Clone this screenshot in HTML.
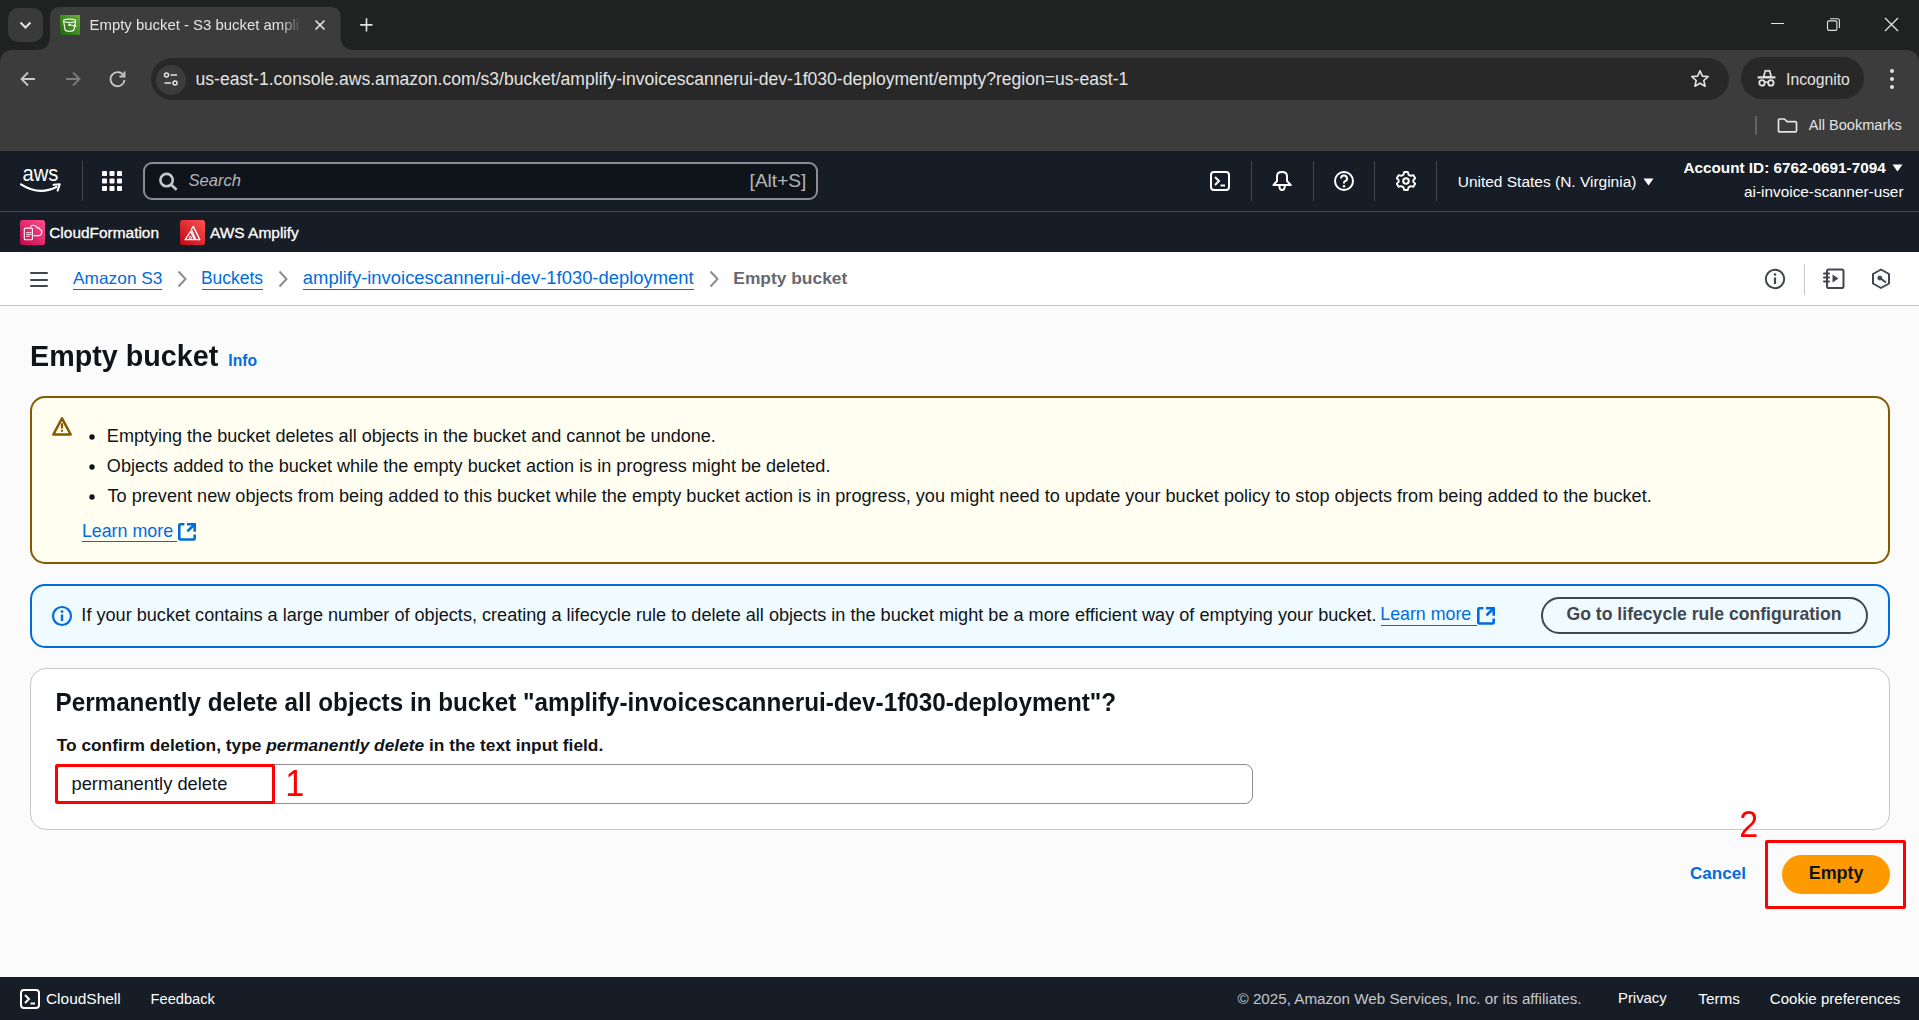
<!DOCTYPE html>
<html><head><meta charset="utf-8"><title>Empty bucket - S3 bucket</title>
<style>html,body{margin:0;padding:0;width:1919px;height:1020px;overflow:hidden;background:#fafafa;font-family:"Liberation Sans",sans-serif;}</style>
</head><body>
<div style='position:absolute;left:0px;top:0px;width:1919px;height:50px;background:#202221'></div><div style='position:absolute;left:8px;top:8px;width:35px;height:34px;background:#3a3a3a;border-radius:10px'></div><svg style='position:absolute;left:18px;top:19px;' width='15' height='12' viewBox='0 0 15 12'><path d='M2.5 3.5 L7.5 8.5 L12.5 3.5' fill='none' stroke='#e3e3e3' stroke-width='2'/></svg><svg style='position:absolute;left:26px;top:7px;' width='345' height='44' viewBox='0 0 345 44'><path d='M10 43 Q24 43 24 29 L24 10.5 Q24 0 34.5 0 L304 0 Q314.6 0 314.6 10.5 L314.6 29 Q314.6 43 328.6 43 L328.6 44 L10 44 Z' fill='#3c3c3c'/></svg><svg style='position:absolute;left:60px;top:15px;' width='20' height='20' viewBox='0 0 20 20'><defs><linearGradient id='fg' x1='0' y1='1' x2='1' y2='0'><stop offset='0' stop-color='#1b660f'/><stop offset='1' stop-color='#6cae3e'/></linearGradient></defs><rect width='20' height='20' fill='url(#fg)'/><ellipse cx='9.6' cy='5.8' rx='6' ry='1.7' fill='none' stroke='#e8f5e0' stroke-width='1.2'/><path d='M3.6 5.8 L5 14.5 Q5.5 16.3 9.6 16.3 Q13.5 16.3 14 14.5 L15.6 5.8' fill='none' stroke='#e8f5e0' stroke-width='1.2'/><circle cx='9.5' cy='9.7' r='1.3' fill='#e8f5e0'/><path d='M9.5 9.7 L14.5 11' stroke='#e8f5e0' stroke-width='1.1'/><path d='M14 9.3 L16.8 11.2 L14 12.6 Z' fill='#fff'/></svg><svg style='position:absolute;left:314px;top:19px;' width='12' height='12' viewBox='0 0 12 12'><path d='M1.5 1.5 L10.5 10.5 M10.5 1.5 L1.5 10.5' stroke='#e3e3e3' stroke-width='1.7'/></svg><svg style='position:absolute;left:359.5px;top:18px;' width='13' height='14' viewBox='0 0 13 14'><path d='M6.5 0.3 V13.5 M0.2 6.9 H12.5' stroke='#e3e3e3' stroke-width='1.6'/></svg><div style='position:absolute;left:1771px;top:23px;width:13px;height:1.1999999999999993px;background:#e3e3e3'></div><svg style='position:absolute;left:1826px;top:17px;' width='15' height='15' viewBox='0 0 15 15'><rect x='1.5' y='3.9' width='9.4' height='9.5' rx='1.3' fill='none' stroke='#e3e3e3' stroke-width='1.1'/><path d='M4 1.7 H11.6 Q13.4 1.7 13.4 3.5 V11' fill='none' stroke='#e3e3e3' stroke-width='1.1'/></svg><svg style='position:absolute;left:1884px;top:17px;' width='15' height='15' viewBox='0 0 15 15'><path d='M1 1 L14 14 M14 1 L1 14' stroke='#e3e3e3' stroke-width='1.3'/></svg><div style='position:absolute;left:0px;top:50px;width:1919px;height:101px;background:#3c3c3c'></div><div style='position:absolute;left:0px;top:50px;width:12px;height:12px;background:#202221'></div><div style='position:absolute;left:0px;top:50px;width:12px;height:12px;background:#3c3c3c;border-top-left-radius:12px'></div><div style='position:absolute;left:1907px;top:50px;width:12px;height:12px;background:#202221'></div><div style='position:absolute;left:1907px;top:50px;width:12px;height:12px;background:#3c3c3c;border-top-right-radius:12px'></div><svg style='position:absolute;left:19px;top:70px;' width='18' height='18' viewBox='0 0 18 18'><path d='M16 9 H3 M9 2.5 L2.5 9 L9 15.5' fill='none' stroke='#c7c7c7' stroke-width='1.8'/></svg><svg style='position:absolute;left:64px;top:70px;' width='18' height='18' viewBox='0 0 18 18'><path d='M2 9 H15 M9 2.5 L15.5 9 L9 15.5' fill='none' stroke='#7c7c7c' stroke-width='1.8'/></svg><svg style='position:absolute;left:108px;top:68.8px;' width='20' height='20' viewBox='0 0 20 20'><path d='M15.5 6.5 A7 7 0 1 0 16.5 11' fill='none' stroke='#c7c7c7' stroke-width='1.8'/><path d='M16.5 2.5 V7.5 H11.5' fill='none' stroke='#c7c7c7' stroke-width='1.8'/></svg><div style='position:absolute;left:151px;top:58px;width:1578px;height:42px;background:#282828;border-radius:21px'></div><div style='position:absolute;left:156px;top:65px;width:30px;height:30px;background:#3c3c3c;border-radius:15px'></div><svg style='position:absolute;left:162px;top:70.2px;' width='18' height='18' viewBox='0 0 18 18'><circle cx='4.5' cy='5' r='2' fill='none' stroke='#e3e3e3' stroke-width='1.5'/><path d='M8.5 5 H15' stroke='#e3e3e3' stroke-width='1.5'/><circle cx='13' cy='13' r='2' fill='none' stroke='#e3e3e3' stroke-width='1.5'/><path d='M2.5 13 H9' stroke='#e3e3e3' stroke-width='1.5'/></svg><svg style='position:absolute;left:1690px;top:69px;' width='20' height='20' viewBox='0 0 20 20'><path d='M10 1.8 L12.4 7.1 L18.2 7.6 L13.8 11.5 L15.1 17.2 L10 14.2 L4.9 17.2 L6.2 11.5 L1.8 7.6 L7.6 7.1 Z' fill='none' stroke='#e3e3e3' stroke-width='1.6' stroke-linejoin='round'/></svg><div style='position:absolute;left:1741px;top:57px;width:123px;height:42px;background:#282828;border-radius:21px'></div><svg style='position:absolute;left:1757px;top:69px;' width='20' height='20' viewBox='0 0 20 20'><path d='M6.6 8 L8.3 1.6 Q9.6 2.4 10.9 1.6 Q12 2.3 12.6 1.6 L14.3 8 Z' fill='none' stroke='#e3e3e3' stroke-width='1.7' stroke-linejoin='round'/><path d='M0.6 8.4 H18.4' stroke='#e3e3e3' stroke-width='2.2'/><circle cx='5' cy='13.9' r='2.7' fill='none' stroke='#e3e3e3' stroke-width='1.8'/><circle cx='13.9' cy='13.9' r='2.7' fill='none' stroke='#e3e3e3' stroke-width='1.8'/><path d='M7.6 13.6 Q9.45 12.6 11.3 13.6' fill='none' stroke='#e3e3e3' stroke-width='1.5'/></svg><svg style='position:absolute;left:1888px;top:68px;' width='8' height='24' viewBox='0 0 8 24'><circle cx='4' cy='3' r='2' fill='#e3e3e3'/><circle cx='4' cy='11' r='2' fill='#e3e3e3'/><circle cx='4' cy='19' r='2' fill='#e3e3e3'/></svg><div style='position:absolute;left:1755.3px;top:115.5px;width:2.0px;height:19.0px;background:#626262;border-radius:1px'></div><svg style='position:absolute;left:1776px;top:116px;' width='22' height='18' viewBox='0 0 22 18'><path d='M2.5 4 Q2.5 3 3.5 3 H8.5 L11 5.6 H19.5 Q20.5 5.6 20.5 6.6 V14.8 Q20.5 15.8 19.5 15.8 H3.5 Q2.5 15.8 2.5 14.8 Z' fill='none' stroke='#e3e3e3' stroke-width='1.7' stroke-linejoin='round'/></svg><div style='position:absolute;left:0px;top:151px;width:1919px;height:101px;background:#161d26'></div><div style='position:absolute;left:0px;top:211px;width:1919px;height:1px;background:#424650'></div><svg style='position:absolute;left:20px;top:167px;' width='42' height='27' viewBox='0 0 42 27'><text x='2.4' y='13.8' font-family='Liberation Sans' font-weight='400' font-size='22.5' fill='#fff' textLength='36' lengthAdjust='spacingAndGlyphs'>aws</text><path d='M1 17.4 Q19 29 36.3 20' fill='none' stroke='#fff' stroke-width='2.3' stroke-linecap='round'/><path d='M33.6 17.8 L39.8 17.2 L37.6 23.6' fill='none' stroke='#fff' stroke-width='2' stroke-linecap='round' stroke-linejoin='round'/></svg><div style='position:absolute;left:82px;top:161px;width:1px;height:40px;background:#424650'></div><svg style='position:absolute;left:102px;top:171px;' width='20' height='20' viewBox='0 0 20 20'><rect x='0' y='0' width='5' height='5' rx='0.8' fill='#fff'/><rect x='0' y='7.5' width='5' height='5' rx='0.8' fill='#fff'/><rect x='0' y='15' width='5' height='5' rx='0.8' fill='#fff'/><rect x='7.5' y='0' width='5' height='5' rx='0.8' fill='#fff'/><rect x='7.5' y='7.5' width='5' height='5' rx='0.8' fill='#fff'/><rect x='7.5' y='15' width='5' height='5' rx='0.8' fill='#fff'/><rect x='15' y='0' width='5' height='5' rx='0.8' fill='#fff'/><rect x='15' y='7.5' width='5' height='5' rx='0.8' fill='#fff'/><rect x='15' y='15' width='5' height='5' rx='0.8' fill='#fff'/></svg><div style='position:absolute;left:143px;top:162px;width:675px;height:38px;background:#0f141a;border:2px solid #8c8c94;border-radius:9px;box-sizing:border-box'></div><svg style='position:absolute;left:158px;top:172px;' width='21' height='21' viewBox='0 0 21 21'><circle cx='8.6' cy='8.1' r='6.2' fill='none' stroke='#c6c6cd' stroke-width='2.6'/><path d='M13.2 12.8 L18.6 17.8' stroke='#c6c6cd' stroke-width='2.7'/></svg><svg style='position:absolute;left:1210px;top:171px;' width='20' height='20' viewBox='0 0 20 20'><rect x='1' y='1' width='18' height='18' rx='3' fill='none' stroke='#fff' stroke-width='2'/><path d='M5 6 L9 10 L5 14' fill='none' stroke='#fff' stroke-width='2'/><path d='M10.5 14.5 H15' stroke='#fff' stroke-width='2'/></svg><div style='position:absolute;left:1250.5px;top:161px;width:1.0px;height:40px;background:#424650'></div><div style='position:absolute;left:1313px;top:161px;width:1px;height:40px;background:#424650'></div><div style='position:absolute;left:1374px;top:161px;width:1px;height:40px;background:#424650'></div><div style='position:absolute;left:1436px;top:161px;width:1px;height:40px;background:#424650'></div><svg style='position:absolute;left:1272px;top:171px;' width='20' height='21' viewBox='0 0 20 21'><path d='M5 10 V5.2 Q5 1 10 1 Q15 1 15 5.2 V10 L18.8 14.1 H1.4 Z' fill='none' stroke='#fff' stroke-width='2' stroke-linejoin='round'/><path d='M7.4 15 Q7.4 19 10.1 19 Q12.8 19 12.8 15' fill='none' stroke='#fff' stroke-width='2'/></svg><svg style='position:absolute;left:1334px;top:171px;' width='20' height='20' viewBox='0 0 20 20'><circle cx='10' cy='10' r='9' fill='none' stroke='#fff' stroke-width='2'/><path d='M7 7.5 A3 3 0 1 1 10.5 10.5 Q10 10.8 10 12.5' fill='none' stroke='#fff' stroke-width='2'/><circle cx='10' cy='15.3' r='1.2' fill='#fff'/></svg><svg style='position:absolute;left:1396px;top:171px;' width='20' height='20' viewBox='0 0 20 20'><path d='M8.2 1 H11.8 L12.5 3.6 L14.8 4.9 L17.4 4.2 L19.2 7.3 L17.3 9.2 V10.8 L19.2 12.7 L17.4 15.8 L14.8 15.1 L12.5 16.4 L11.8 19 H8.2 L7.5 16.4 L5.2 15.1 L2.6 15.8 L0.8 12.7 L2.7 10.8 V9.2 L0.8 7.3 L2.6 4.2 L5.2 4.9 L7.5 3.6 Z' fill='none' stroke='#fff' stroke-width='1.9' stroke-linejoin='round'/><circle cx='10' cy='10' r='2.8' fill='none' stroke='#fff' stroke-width='2'/></svg><svg style='position:absolute;left:1643px;top:178px;' width='11' height='8' viewBox='0 0 11 8'><path d='M0.5 0.5 H10.5 L5.5 7.5 Z' fill='#fff'/></svg><svg style='position:absolute;left:1892px;top:164px;' width='11' height='8' viewBox='0 0 11 8'><path d='M0.5 0.5 H10.5 L5.5 7.5 Z' fill='#fff'/></svg><svg style='position:absolute;left:20px;top:220px;' width='25' height='25' viewBox='0 0 25 25'><defs><linearGradient id='cg' x1='0' y1='1' x2='1' y2='0'><stop offset='0' stop-color='#c2094f'/><stop offset='1' stop-color='#ff4f8b'/></linearGradient></defs><rect width='25' height='25' rx='2.5' fill='url(#cg)'/><rect x='4.3' y='8.1' width='8.1' height='11.7' rx='1' fill='none' stroke='#fff' stroke-width='1.1'/><path d='M6.2 12.6 H11.5 M6.2 14.5 H11.5 M6.2 16.3 H9.5' stroke='#f5c6d8' stroke-width='1.2'/><path d='M10.4 6.6 Q12 4.6 14.5 5.5 Q16.2 6.2 17 7.6 Q19.5 7.6 20.2 9.6 Q22.4 10.6 21.6 13 Q21 15.6 19 15.6 H13.5' fill='none' stroke='#fff' stroke-width='1.1'/></svg><svg style='position:absolute;left:180px;top:220px;' width='25' height='25' viewBox='0 0 25 25'><defs><linearGradient id='ag' x1='0' y1='1' x2='1' y2='0'><stop offset='0' stop-color='#bd0816'/><stop offset='1' stop-color='#ff5252'/></linearGradient></defs><rect width='25' height='25' rx='2.5' fill='url(#ag)'/><path d='M11.3 9.3 L13.3 6.4 L19.8 19.6 H15.7 Z' fill='none' stroke='#fff' stroke-width='1.3' stroke-linejoin='round'/><path d='M10.6 11.4 L5.1 19.6 H14.6 Z' fill='none' stroke='#fff' stroke-width='1.3' stroke-linejoin='round'/><path d='M10.3 15.8 L8.9 18.2 H11.9 Z' fill='none' stroke='#fff' stroke-width='0.9'/></svg><div style='position:absolute;left:0px;top:252px;width:1919px;height:54px;background:#ffffff'></div><div style='position:absolute;left:0px;top:305px;width:1919px;height:1px;background:#c6c6cd'></div><div style='position:absolute;left:0px;top:306px;width:1919px;height:671px;background:#fbfbfb'></div><div style='position:absolute;left:30px;top:271.5px;width:18px;height:2.0px;background:#424650;border-radius:1px'></div><div style='position:absolute;left:30px;top:278.5px;width:18px;height:2.0px;background:#424650;border-radius:1px'></div><div style='position:absolute;left:30px;top:285px;width:18px;height:2px;background:#424650;border-radius:1px'></div><svg style='position:absolute;left:177px;top:270px;' width='11' height='18' viewBox='0 0 11 18'><path d='M1.5 1.5 L8.5 9 L1.5 16.5' fill='none' stroke='#8c8c94' stroke-width='2'/></svg><svg style='position:absolute;left:278px;top:270px;' width='11' height='18' viewBox='0 0 11 18'><path d='M1.5 1.5 L8.5 9 L1.5 16.5' fill='none' stroke='#8c8c94' stroke-width='2'/></svg><svg style='position:absolute;left:709px;top:270px;' width='11' height='18' viewBox='0 0 11 18'><path d='M1.5 1.5 L8.5 9 L1.5 16.5' fill='none' stroke='#8c8c94' stroke-width='2'/></svg><div style='position:absolute;left:73px;top:289px;width:89px;height:1px;background:#006ce0'></div><div style='position:absolute;left:202px;top:289px;width:61px;height:1px;background:#006ce0'></div><div style='position:absolute;left:303px;top:289px;width:391px;height:1px;background:#006ce0'></div><svg style='position:absolute;left:1764px;top:268px;' width='22' height='22' viewBox='0 0 22 22'><circle cx='11' cy='11' r='9.2' fill='none' stroke='#424650' stroke-width='2'/><path d='M11 9.5 V16' stroke='#424650' stroke-width='2.2'/><circle cx='11' cy='6.5' r='1.3' fill='#424650'/></svg><div style='position:absolute;left:1804px;top:264px;width:1px;height:31px;background:#c6c6cd'></div><svg style='position:absolute;left:1823px;top:268px;' width='23' height='22' viewBox='0 0 23 22'><rect x='4' y='1.5' width='16.5' height='18.5' rx='1.8' fill='none' stroke='#424650' stroke-width='2'/><path d='M1 5.5 H6 M1 9.5 H6 M1 13.5 H6' stroke='#424650' stroke-width='2' stroke-linecap='round'/><path d='M9.5 6.5 L15.5 10.5 L9.5 14.5 Z' fill='#424650'/></svg><svg style='position:absolute;left:1871px;top:268px;' width='20' height='22' viewBox='0 0 20 22'><path d='M10 1.5 L18 6 V15.5 L10 20 L2 15.5 V6 Z' fill='none' stroke='#424650' stroke-width='2' stroke-linejoin='round'/><circle cx='8.8' cy='10' r='2' fill='#424650' stroke='#424650' stroke-width='1'/><path d='M9 10 L15 14.5' stroke='#424650' stroke-width='2'/></svg><div style='position:absolute;left:30px;top:395.5px;width:1860px;height:168.5px;background:#fffef0;border:2px solid #855900;border-radius:15px;box-sizing:border-box'></div><svg style='position:absolute;left:51px;top:416px;' width='22' height='21' viewBox='0 0 22 21'><path d='M11 2.3 L19.7 18.5 H2.3 Z' fill='none' stroke='#855900' stroke-width='2.5' stroke-linejoin='round'/><path d='M11 7.2 V12.5' stroke='#855900' stroke-width='2.2'/><rect x='9.9' y='13.8' width='2.2' height='1.9' fill='#855900'/></svg><svg style='position:absolute;left:88px;top:433px;' width='8' height='8' viewBox='0 0 8 8'><circle cx='4' cy='4' r='2.7' fill='#0f141a'/></svg><svg style='position:absolute;left:88px;top:463px;' width='8' height='8' viewBox='0 0 8 8'><circle cx='4' cy='4' r='2.7' fill='#0f141a'/></svg><svg style='position:absolute;left:88px;top:493px;' width='8' height='8' viewBox='0 0 8 8'><circle cx='4' cy='4' r='2.7' fill='#0f141a'/></svg><div style='position:absolute;left:82px;top:541px;width:95px;height:1px;background:#006ce0'></div><svg style='position:absolute;left:178px;top:523px;' width='18' height='18' viewBox='0 0 18 18'><path d='M6.4 1.3 H2.3 Q1.3 1.3 1.3 2.3 V15.5 Q1.3 16.5 2.3 16.5 H15.7 Q16.7 16.5 16.7 15.5 V11.5' fill='none' stroke='#006ce0' stroke-width='2.6'/><path d='M9 1.3 H16.7 V8.8' fill='none' stroke='#006ce0' stroke-width='2.6'/><path d='M9.4 8.4 L16.2 1.8' stroke='#006ce0' stroke-width='2.6'/></svg><div style='position:absolute;left:30px;top:584px;width:1860px;height:64px;background:#f0fbff;border:2px solid #006ce0;border-radius:15px;box-sizing:border-box'></div><svg style='position:absolute;left:51px;top:605px;' width='22' height='22' viewBox='0 0 22 22'><circle cx='11' cy='11' r='9' fill='none' stroke='#006ce0' stroke-width='2.2'/><path d='M11 9.5 V16' stroke='#006ce0' stroke-width='2.4'/><circle cx='11' cy='6.6' r='1.4' fill='#006ce0'/></svg><div style='position:absolute;left:1381px;top:625px;width:96px;height:1px;background:#006ce0'></div><svg style='position:absolute;left:1476.5px;top:606.5px;' width='18' height='18' viewBox='0 0 18 18'><path d='M6.4 1.3 H2.3 Q1.3 1.3 1.3 2.3 V15.5 Q1.3 16.5 2.3 16.5 H15.7 Q16.7 16.5 16.7 15.5 V11.5' fill='none' stroke='#006ce0' stroke-width='2.6'/><path d='M9 1.3 H16.7 V8.8' fill='none' stroke='#006ce0' stroke-width='2.6'/><path d='M9.4 8.4 L16.2 1.8' stroke='#006ce0' stroke-width='2.6'/></svg><div style='position:absolute;left:1540.5px;top:597px;width:327.5px;height:37px;border:2px solid #424650;border-radius:20px;box-sizing:border-box'></div><div style='position:absolute;left:30px;top:668px;width:1860px;height:162px;background:#ffffff;border:1px solid #c6c6cd;border-radius:16px;box-sizing:border-box'></div><div style='position:absolute;left:56px;top:764px;width:1197px;height:40px;background:#ffffff;border:1px solid #8c8c94;border-radius:8px;box-sizing:border-box'></div><div style='position:absolute;left:54.5px;top:764px;width:220.5px;height:40px;border:3.5px solid #ff0000;border-radius:2px;box-sizing:border-box'></div><div style='position:absolute;left:1765px;top:840px;width:140.5px;height:68.5px;border:3.5px solid #ff0000;border-radius:2px;box-sizing:border-box'></div><div style='position:absolute;left:1782px;top:855px;width:108px;height:39px;background:#ff9900;border-radius:20px'></div><div style='position:absolute;left:0px;top:977px;width:1919px;height:43px;background:#161d26'></div><svg style='position:absolute;left:20px;top:989px;' width='20' height='20' viewBox='0 0 20 20'><rect x='1' y='1' width='18' height='18' rx='3' fill='none' stroke='#fff' stroke-width='2'/><path d='M5 6 L9 10 L5 14' fill='none' stroke='#fff' stroke-width='2'/><path d='M10.5 14.5 H15' stroke='#fff' stroke-width='2'/></svg>
<span style='position:absolute;left:89.57px;top:18.31px;font-family:"Liberation Sans", sans-serif;font-size:14.924px;line-height:1;font-weight:400;font-style:normal;color:#e3e3e3;white-space:pre;-webkit-mask-image:linear-gradient(90deg,#000 0,#000 190px,transparent 212px);'>Empty bucket - S3 bucket ampli</span><span style='position:absolute;left:195.50px;top:70.56px;font-family:"Liberation Sans", sans-serif;font-size:17.572px;line-height:1;font-weight:400;font-style:normal;color:#e3e3e3;white-space:pre;'>us-east-1.console.aws.amazon.com/s3/bucket/amplify-invoicescannerui-dev-1f030-deployment/empty?region=us-east-1</span><span style='position:absolute;left:1786.02px;top:71.61px;font-family:"Liberation Sans", sans-serif;font-size:15.748px;line-height:1;font-weight:400;font-style:normal;color:#e3e3e3;white-space:pre;'>Incognito</span><span style='position:absolute;left:1808.75px;top:118.10px;font-family:"Liberation Sans", sans-serif;font-size:14.588px;line-height:1;font-weight:400;font-style:normal;color:#e3e3e3;white-space:pre;'>All Bookmarks</span><span style='position:absolute;left:188.48px;top:172.70px;font-family:"Liberation Sans", sans-serif;font-size:16.591px;line-height:1;font-weight:400;font-style:italic;color:#b4b4bb;white-space:pre;'>Search</span><span style='position:absolute;left:749.62px;top:170.50px;font-family:"Liberation Sans", sans-serif;font-size:19.062px;line-height:1;font-weight:400;font-style:normal;color:#b4b4bb;white-space:pre;'>[Alt+S]</span><span style='position:absolute;left:1457.73px;top:174.23px;font-family:"Liberation Sans", sans-serif;font-size:15.492px;line-height:1;font-weight:400;font-style:normal;color:#ffffff;white-space:pre;'>United States (N. Virginia)</span><span style='position:absolute;left:1683.40px;top:159.99px;font-family:"Liberation Sans", sans-serif;font-size:15.305px;line-height:1;font-weight:700;font-style:normal;color:#ffffff;white-space:pre;'>Account ID: 6762-0691-7094</span><span style='position:absolute;left:1744.04px;top:183.94px;font-family:"Liberation Sans", sans-serif;font-size:15.359px;line-height:1;font-weight:400;font-style:normal;color:#ffffff;white-space:pre;'>ai-invoice-scanner-user</span><span style='position:absolute;left:49.23px;top:225.26px;font-family:"Liberation Sans", sans-serif;font-size:15.458px;line-height:1;font-weight:400;font-style:normal;color:#ffffff;white-space:pre;-webkit-text-stroke-width:0.3px;'>CloudFormation</span><span style='position:absolute;left:210.00px;top:225.24px;font-family:"Liberation Sans", sans-serif;font-size:15.478px;line-height:1;font-weight:400;font-style:normal;color:#ffffff;white-space:pre;-webkit-text-stroke-width:0.3px;'>AWS Amplify</span><span style='position:absolute;left:73.00px;top:270.27px;font-family:"Liberation Sans", sans-serif;font-size:17.328px;line-height:1;font-weight:400;font-style:normal;color:#006ce0;white-space:pre;'>Amazon S3</span><span style='position:absolute;left:200.90px;top:270.14px;font-family:"Liberation Sans", sans-serif;font-size:17.487px;line-height:1;font-weight:400;font-style:normal;color:#006ce0;white-space:pre;'>Buckets</span><span style='position:absolute;left:302.85px;top:269.34px;font-family:"Liberation Sans", sans-serif;font-size:18.418px;line-height:1;font-weight:400;font-style:normal;color:#006ce0;white-space:pre;'>amplify-invoicescannerui-dev-1f030-deployment</span><span style='position:absolute;left:733.32px;top:270.22px;font-family:"Liberation Sans", sans-serif;font-size:17.385px;line-height:1;font-weight:700;font-style:normal;color:#656871;white-space:pre;'>Empty bucket</span><span style='position:absolute;left:30.10px;top:341.90px;font-family:"Liberation Sans", sans-serif;font-size:28.709px;line-height:1;font-weight:700;font-style:normal;color:#0f141a;white-space:pre;transform:scaleY(1.035);transform-origin:0 85%;'>Empty bucket</span><span style='position:absolute;left:228.33px;top:352.59px;font-family:"Liberation Sans", sans-serif;font-size:15.659px;line-height:1;font-weight:700;font-style:normal;color:#006ce0;white-space:pre;'>Info</span><span style='position:absolute;left:106.87px;top:426.86px;font-family:"Liberation Sans", sans-serif;font-size:18.052px;line-height:1;font-weight:400;font-style:normal;color:#0f141a;white-space:pre;'>Emptying the bucket deletes all objects in the bucket and cannot be undone.</span><span style='position:absolute;left:106.87px;top:456.62px;font-family:"Liberation Sans", sans-serif;font-size:18.097px;line-height:1;font-weight:400;font-style:normal;color:#0f141a;white-space:pre;'>Objects added to the bucket while the empty bucket action is in progress might be deleted.</span><span style='position:absolute;left:107.50px;top:486.50px;font-family:"Liberation Sans", sans-serif;font-size:18.121px;line-height:1;font-weight:400;font-style:normal;color:#0f141a;white-space:pre;'>To prevent new objects from being added to this bucket while the empty bucket action is in progress, you might need to update your bucket policy to stop objects from being added to the bucket.</span><span style='position:absolute;left:81.89px;top:522.84px;font-family:"Liberation Sans", sans-serif;font-size:17.841px;line-height:1;font-weight:400;font-style:normal;color:#006ce0;white-space:pre;'>Learn more</span><span style='position:absolute;left:81.37px;top:605.60px;font-family:"Liberation Sans", sans-serif;font-size:18.116px;line-height:1;font-weight:400;font-style:normal;color:#0f141a;white-space:pre;'>If your bucket contains a large number of objects, creating a lifecycle rule to delete all objects in the bucket might be a more efficient way of emptying your bucket.</span><span style='position:absolute;left:1380.29px;top:605.87px;font-family:"Liberation Sans", sans-serif;font-size:17.8px;line-height:1;font-weight:400;font-style:normal;color:#006ce0;white-space:pre;'>Learn more</span><span style='position:absolute;left:1566.50px;top:605.92px;font-family:"Liberation Sans", sans-serif;font-size:17.626px;line-height:1;font-weight:700;font-style:normal;color:#424650;white-space:pre;'>Go to lifecycle rule configuration</span><span style='position:absolute;left:55.48px;top:691.38px;font-family:"Liberation Sans", sans-serif;font-size:24.26px;line-height:1;font-weight:700;font-style:normal;color:#0f141a;white-space:pre;transform:scaleY(1.035);transform-origin:0 85%;'>Permanently delete all objects in bucket "amplify-invoicescannerui-dev-1f030-deployment"?</span><span style='position:absolute;left:56.70px;top:737.06px;font-family:"Liberation Sans", sans-serif;font-size:17.346px;line-height:1;font-weight:700;font-style:normal;color:#0f141a;white-space:pre;'>To confirm deletion, type <i>permanently delete</i> in the text input field.</span><span style='position:absolute;left:71.44px;top:774.61px;font-family:"Liberation Sans", sans-serif;font-size:18.346px;line-height:1;font-weight:400;font-style:normal;color:#0f141a;white-space:pre;'>permanently delete</span><span style='position:absolute;left:285.16px;top:766.76px;font-family:"Liberation Sans", sans-serif;font-size:34.286px;line-height:1;font-weight:400;font-style:normal;color:#ff0000;white-space:pre;transform:scaleY(1.06);transform-origin:0 85%;'>1</span><span style='position:absolute;left:1739.22px;top:808.17px;font-family:"Liberation Sans", sans-serif;font-size:34.039px;line-height:1;font-weight:400;font-style:normal;color:#ff0000;white-space:pre;transform:scaleY(1.1);transform-origin:0 85%;'>2</span><span style='position:absolute;left:1689.94px;top:865.39px;font-family:"Liberation Sans", sans-serif;font-size:17.071px;line-height:1;font-weight:700;font-style:normal;color:#006ce0;white-space:pre;'>Cancel</span><span style='position:absolute;left:1808.69px;top:864.66px;font-family:"Liberation Sans", sans-serif;font-size:17.934px;line-height:1;font-weight:700;font-style:normal;color:#0f141a;white-space:pre;'>Empty</span><span style='position:absolute;left:45.93px;top:990.83px;font-family:"Liberation Sans", sans-serif;font-size:15.489px;line-height:1;font-weight:400;font-style:normal;color:#ffffff;white-space:pre;'>CloudShell</span><span style='position:absolute;left:150.59px;top:991.58px;font-family:"Liberation Sans", sans-serif;font-size:14.61px;line-height:1;font-weight:400;font-style:normal;color:#ffffff;white-space:pre;'>Feedback</span><span style='position:absolute;left:1237.50px;top:991.09px;font-family:"Liberation Sans", sans-serif;font-size:15.194px;line-height:1;font-weight:400;font-style:normal;color:#c6c6cd;white-space:pre;'>© 2025, Amazon Web Services, Inc. or its affiliates.</span><span style='position:absolute;left:1617.98px;top:991.34px;font-family:"Liberation Sans", sans-serif;font-size:14.893px;line-height:1;font-weight:400;font-style:normal;color:#ffffff;white-space:pre;'>Privacy</span><span style='position:absolute;left:1698.30px;top:990.97px;font-family:"Liberation Sans", sans-serif;font-size:15.334px;line-height:1;font-weight:400;font-style:normal;color:#ffffff;white-space:pre;'>Terms</span><span style='position:absolute;left:1769.86px;top:991.19px;font-family:"Liberation Sans", sans-serif;font-size:15.066px;line-height:1;font-weight:400;font-style:normal;color:#ffffff;white-space:pre;'>Cookie preferences</span>
</body></html>
